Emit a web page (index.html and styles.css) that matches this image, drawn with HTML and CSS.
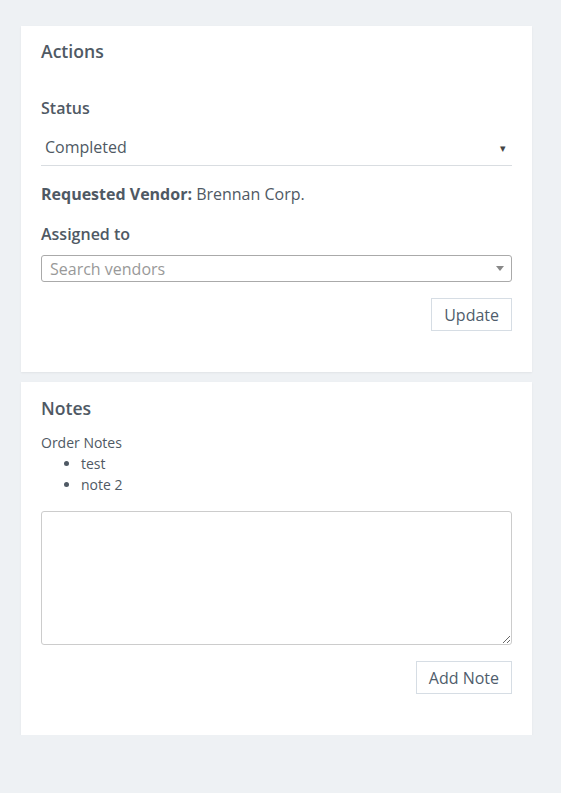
FILE: index.html
```html
<!DOCTYPE html>
<html>
<head>
<meta charset="utf-8">
<link rel="stylesheet" href="styles.css">
</head>
<body>
<div class="page">
  <section class="card">
    <h2 class="card-title">Actions</h2>
    <div class="label status-label">Status</div>
    <div class="select">
      <span>Completed</span>
      <span class="caret">&#9662;</span>
    </div>
    <div class="vendor"><b>Requested Vendor:</b> Brennan Corp.</div>
    <div class="label assigned-label">Assigned to</div>
    <div class="search">
      <span class="placeholder">Search vendors</span>
      <svg class="search-caret" width="8" height="5" viewBox="0 0 8 5"><path d="M0 0h8L4 5z" fill="#888"/></svg>
    </div>
    <div class="actions"><button class="btn">Update</button></div>
  </section>
  <section class="card card-notes">
    <h2 class="card-title">Notes</h2>
    <div class="order-notes">Order Notes</div>
    <ul class="notes-list">
      <li>test</li>
      <li>note 2</li>
    </ul>
    <textarea class="note-input"></textarea>
    <div class="actions"><button class="btn">Add Note</button></div>
  </section>
</div>
</body>
</html>
```
FILE: styles.css
```css
html, body {
  margin: 0;
  padding: 0;
  background: #eef1f4;
  font-family: "Open Sans", "Noto Sans", sans-serif;
  color: #4f5964;
}
.page {
  width: 511px;
  padding: 26px 0 0 21px;
  display: flex;
  flex-direction: column;
  gap: 10px;
}
.card {
  background: #fff;
  padding: 14px 20px 41px;
  box-shadow: 0 1px 2px rgba(0,0,0,0.06);
}
.card-notes { padding-top: 15px; }
.card-title {
  margin: 0;
  font-size: 17.6px;
  line-height: 22px;
  font-weight: 600;
  color: #4f5964;
}
.label {
  font-size: 16px;
  line-height: 22px;
  font-weight: 600;
}
.status-label { margin-top: 35px; }
.select {
  margin-top: 9px;
  height: 38px;
  box-sizing: border-box;
  border-bottom: 1px solid #d9dde1;
  display: flex;
  align-items: center;
  justify-content: space-between;
  padding: 1px 6px 0 4px;
  font-size: 16px;
}
.caret {
  font-size: 11px;
  color: #444;
}
.vendor {
  margin-top: 17px;
  font-size: 16px;
  line-height: 22px;
}
.vendor b { font-weight: 700; }
.assigned-label { margin-top: 18px; }
.search {
  margin-top: 10px;
  height: 27px;
  box-sizing: border-box;
  border: 1px solid #aaa;
  border-radius: 3px;
  display: flex;
  align-items: center;
  justify-content: space-between;
  padding: 0 7px 0 8px;
}
.placeholder {
  color: #999;
  font-size: 16px;
}
.actions {
  display: flex;
  justify-content: flex-end;
  margin-top: 16px;
}
.btn {
  font-family: "Open Sans", "Noto Sans", sans-serif;
  font-size: 16px;
  color: #4f5d6c;
  background: #fff;
  border: 1px solid #d6dde4;
  height: 33px;
  box-sizing: border-box;
  padding: 0 12px;
  border-radius: 0;
}
.order-notes {
  margin-top: 14px;
  font-size: 14px;
  line-height: 20px;
}
.notes-list {
  margin: 0;
  padding-left: 40px;
  font-size: 14px;
  line-height: 21px;
}
.note-input {
  display: block;
  margin-top: 16px;
  width: 100%;
  height: 134px;
  box-sizing: border-box;
  border: 1px solid #ccc;
  border-radius: 3px;
  resize: vertical;
}
```
